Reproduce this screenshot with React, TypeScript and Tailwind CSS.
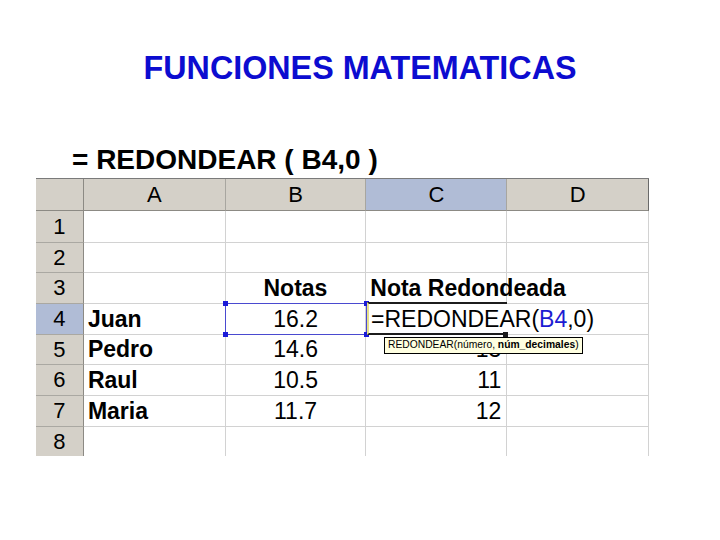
import React from "react";

const rowHeights = [32, 30, 31, 31, 30, 31, 31, 29];

type Cell = { text?: React.ReactNode; align?: "left" | "center" | "right"; bold?: boolean };

const data: Cell[][] = [
  [{}, {}, {}, {}],
  [{}, {}, {}, {}],
  [{}, { text: "Notas", align: "center", bold: true }, { text: "Nota Redondeada", align: "left", bold: true }, {}],
  [{ text: "Juan", bold: true }, { text: "16.2", align: "center" }, {}, {}],
  [{ text: "Pedro", bold: true }, { text: "14.6", align: "center" }, { text: "13", align: "right" }, {}],
  [{ text: "Raul", bold: true }, { text: "10.5", align: "center" }, { text: "11", align: "right" }, {}],
  [{ text: "Maria", bold: true }, { text: "11.7", align: "center" }, { text: "12", align: "right" }, {}],
  [{}, {}, {}, {}],
];

const colW = ["w-[142px]", "w-[141px]", "w-[141px]", "w-[142px]"];

export default function App() {
  return (
    <div
      className="w-[720px] h-[540px] bg-white overflow-hidden flex flex-col"
      style={{ fontFamily: '"Liberation Sans", Arial, sans-serif' }}
    >
      <div className="mt-[52px] text-center text-[32.3px] leading-[32px] font-bold text-[#0c0cd0]">
        FUNCIONES MATEMATICAS
      </div>
      <div className="mt-[62px] pl-[72px] text-[28px] leading-[28px] font-bold text-black">
        = REDONDEAR ( B4,0 )
      </div>
      <div className="mt-[4px] ml-[36px] relative flex flex-col w-[613px] text-[23px] leading-none text-black">
        {/* Header row */}
        <div className="flex h-[33px] border-t border-[#7a7a7a]">
          <div className="w-[48px] bg-[#d4d0c8] border-r border-b border-[#8c8a84]" />
          {["A", "B", "C", "D"].map((c, i) => (
            <div
              key={c}
              className={`${colW[i]} ${i === 2 ? "bg-[#b0bcd6]" : "bg-[#d4d0c8]"} ${
                i === 3 ? "border-r border-[#6a6a6a]" : "border-r border-[#a8a6a0]"
              } border-b border-b-[#8c8a84] flex items-center justify-center text-[22px]`}
            >
              {c}
            </div>
          ))}
        </div>
        {rowHeights.map((h, r) => (
          <div key={r} className="flex" style={{ height: h }}>
            <div
              className={`w-[48px] ${r === 3 ? "bg-[#b0bcd6]" : "bg-[#d4d0c8]"} border-r border-[#8c8a84] ${
                r < 7 ? "border-b border-b-[#aaa8a2]" : ""
              } flex items-center justify-center text-[22px]`}
            >
              {r + 1}
            </div>
            {data[r].map((cell, c) => (
              <div
                key={c}
                className={`${colW[c]} relative border-r border-[#d2d2d2] ${
                  r < 7 ? "border-b border-b-[#d2d2d2]" : ""
                } flex items-center ${
                  cell.align === "center"
                    ? "justify-center"
                    : cell.align === "right"
                    ? "justify-end pr-[5px]"
                    : "justify-start pl-[4px]"
                } ${cell.bold ? "font-bold" : ""} whitespace-nowrap`}
              >
                {cell.text}
              </div>
            ))}
          </div>
        ))}

        {/* B4 selection */}
        <div className="absolute left-[189px] top-[125px] w-[142px] h-[32px] border border-[#4a4ad0] pointer-events-none">
          <div className="absolute -left-[3px] -top-[3px] w-[5px] h-[5px] bg-[#1a1ad8]" />
          <div className="absolute -left-[3px] -bottom-[3px] w-[5px] h-[5px] bg-[#1a1ad8]" />
          <div className="absolute -right-[3px] -top-[3px] w-[5px] h-[5px] bg-[#1a1ad8]" />
          <div className="absolute -right-[3px] -bottom-[3px] w-[5px] h-[5px] bg-[#1a1ad8]" />
        </div>

        {/* C4 editing cell */}
        <div className="absolute left-[331px] top-[124px] w-[140px] h-[33px] border-t-2 border-b-2 border-[#1c1c1c] border-l-2 border-l-[#e6e08a] bg-white pointer-events-none" />
        <div className="absolute left-[467px] top-[154px] w-[5px] h-[5px] bg-[#1c1c1c]" />
        <div className="absolute left-[335px] top-[126px] h-[30px] flex items-center whitespace-nowrap text-[23px]">
          =REDONDEAR(<span className="text-[#1c1cd2]">B4</span>,0)
        </div>

        {/* Tooltip */}
        <div className="absolute left-[348px] top-[159px] h-[17px] px-[3px] flex items-center bg-[#ffffe1] border border-black text-[10.3px] leading-none whitespace-nowrap text-black">
          REDONDEAR(número,&nbsp;<span className="font-bold">núm_decimales</span>)
        </div>
      </div>
    </div>
  );
}
